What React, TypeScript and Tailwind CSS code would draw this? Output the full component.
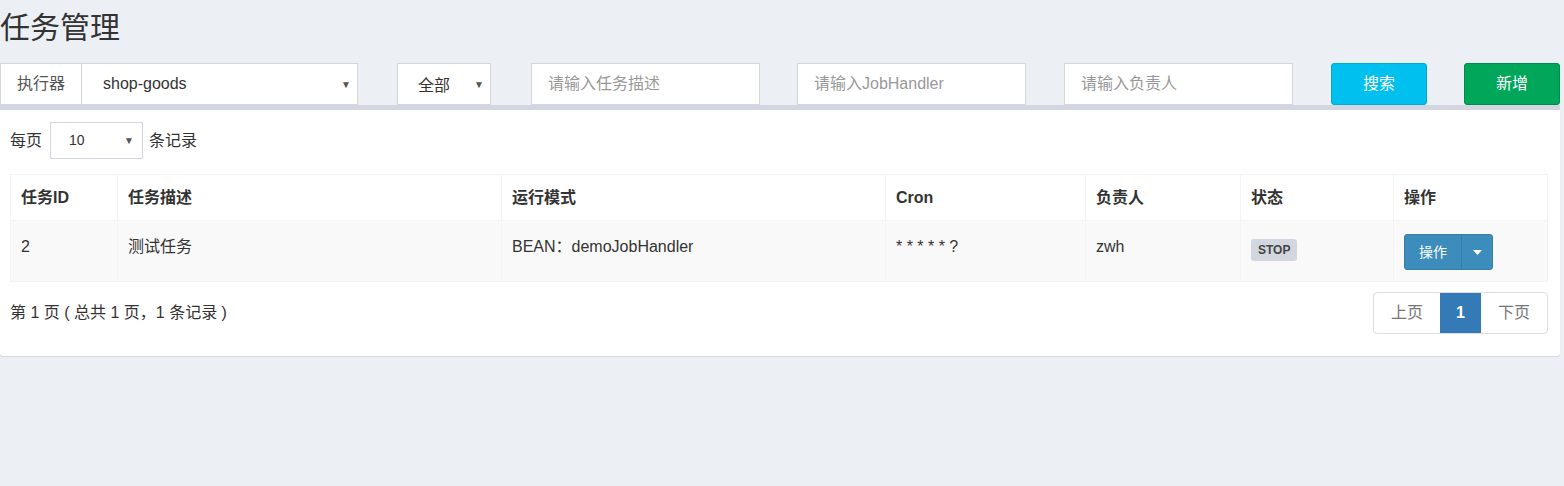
const cols = [
  { label: '任务ID', w: 'w-[107px]' },
  { label: '任务描述', w: 'w-[384px]' },
  { label: '运行模式', w: 'w-[384px]' },
  { label: 'Cron', w: 'w-[200px]' },
  { label: '负责人', w: 'w-[155px]' },
  { label: '状态', w: 'w-[153px]' },
  { label: '操作', w: 'w-[154px]' },
]

function Caret({ className = '' }: { className?: string }) {
  return <span className={`text-[10px] text-[#555] ${className}`}>▼</span>
}

export default function App() {
  return (
    <div
      className="min-h-[486px] bg-[#ecf0f5] text-[#333] text-[16px]"
      style={{ fontFamily: '"Liberation Sans", "Noto Sans CJK SC", sans-serif' }}
    >
      <h1 className="h-[63px] pt-[10px] text-[30px] leading-[36px] text-[#333]">任务管理</h1>

      {/* filters */}
      <div className="flex h-[42px] items-stretch">
        <div className="flex w-[358px] border border-[#d2d6de] bg-white">
          <span className="flex w-[81px] items-center justify-center border-r border-[#d2d6de] text-[#555]">执行器</span>
          <div className="flex flex-1 items-center justify-between pl-[21px] pr-[6px] text-[#333]">
            <span>shop-goods</span>
            <Caret />
          </div>
        </div>
        <div className="ml-[39px] flex w-[94px] items-center justify-between border border-[#d2d6de] bg-white pl-[20px] pr-[6px]">
          <span className="pt-[3px]">全部</span>
          <Caret />
        </div>
        <div className="ml-[40px] flex w-[229px] items-center border border-[#d2d6de] bg-white px-[16px] text-[#999]">请输入任务描述</div>
        <div className="ml-[37px] flex w-[229px] items-center border border-[#d2d6de] bg-white px-[16px] text-[#999]">请输入JobHandler</div>
        <div className="ml-[38px] flex w-[229px] items-center border border-[#d2d6de] bg-white px-[16px] text-[#999]">请输入负责人</div>
        <button className="ml-[38px] w-[96px] rounded-[3px] border border-[#00acd6] bg-[#00c0ef] text-white">搜索</button>
        <button className="ml-[37px] w-[96px] rounded-[3px] border border-[#008d4c] bg-[#00a65a] text-white">新增</button>
      </div>

      {/* box */}
      <div className="w-[1560px] rounded-b-[3px] border-t-[5px] border-[#d2d6de] bg-white pb-[22px] shadow-[0_1px_1px_rgba(0,0,0,0.1)]">
        <div className="flex items-center px-[10px] pt-[12px]">
          <span>每页</span>
          <div className="ml-[8px] mr-[6px] flex h-[37px] w-[93px] items-center justify-between border border-[#d2d6de] pl-[18px] pr-[8px] text-[14px]">
            <span>10</span>
            <Caret />
          </div>
          <span>条记录</span>
        </div>

        <table className="ml-[10px] mt-[15px] border-collapse border border-[#f4f4f4]">
          <thead>
            <tr className="h-[46px]">
              {cols.map((c) => (
                <th key={c.label} className={`${c.w} border border-[#f4f4f4] px-[10px] text-left font-bold`}>
                  {c.label}
                </th>
              ))}
            </tr>
          </thead>
          <tbody>
            <tr className="h-[61px] bg-[#f9f9f9] align-top">
              <td className="border border-[#f4f4f4] px-[10px] pt-[14px]">2</td>
              <td className="border border-[#f4f4f4] px-[10px] pt-[14px]">测试任务</td>
              <td className="border border-[#f4f4f4] px-[10px] pt-[14px]">BEAN：demoJobHandler</td>
              <td className="border border-[#f4f4f4] px-[10px] pt-[14px]">* * * * * ?</td>
              <td className="border border-[#f4f4f4] px-[10px] pt-[14px]">zwh</td>
              <td className="border border-[#f4f4f4] px-[10px] pt-[16px]">
                <span className="inline-block rounded-[3px] bg-[#d2d6de] px-[7px] py-[3px] text-[12px] font-bold leading-[16px] text-[#444]">STOP</span>
              </td>
              <td className="border border-[#f4f4f4] px-[10px] pt-[13px]">
                <div className="inline-flex h-[36px] overflow-hidden rounded-[3px] border border-[#367fa9] bg-[#3c8dbc] text-white">
                  <span className="flex w-[56px] items-center justify-center text-[14px]">操作</span>
                  <span className="flex w-[31px] items-center justify-center border-l border-[#367fa9]">
                    <svg width="9" height="5" viewBox="0 0 9 5"><path d="M0 0h9L4.5 5z" fill="white" /></svg>
                  </span>
                </div>
              </td>
            </tr>
          </tbody>
        </table>

        <div className="mt-[10px] flex items-center justify-between pl-[10px] pr-[12px]">
          <span className="text-[16px]">第 1 页 ( 总共 1 页，1 条记录 )</span>
          <div className="flex h-[42px] overflow-hidden rounded-[4px] border border-[#ddd] text-[16px]">
            <span className="flex w-[66px] items-center justify-center text-[#777]">上页</span>
            <span className="flex w-[41px] items-center justify-center bg-[#337ab7] font-bold text-white">1</span>
            <span className="flex w-[66px] items-center justify-center text-[#777]">下页</span>
          </div>
        </div>
      </div>
    </div>
  )
}
